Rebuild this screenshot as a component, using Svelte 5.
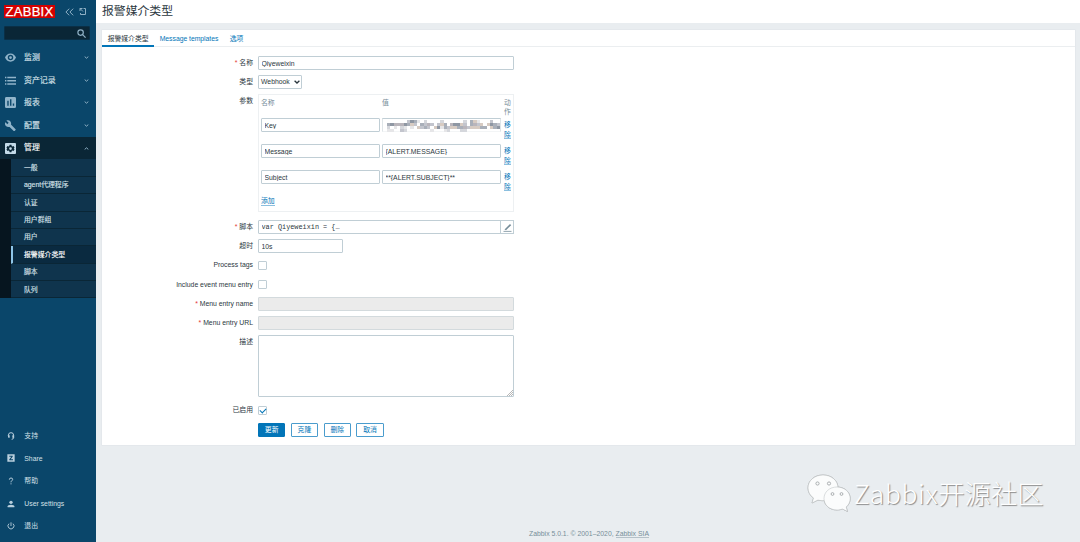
<script lang="ts">
    const mainMenu = [
        { icon: "eye", label: "监测" },
        { icon: "list", label: "资产记录" },
        { icon: "chart", label: "报表" },
        { icon: "wrench", label: "配置" },
        { icon: "gear", label: "管理" },
    ];
    const subMenu = ["一般", "agent代理程序", "认证", "用户群组", "用户", "报警媒介类型", "脚本", "队列"];
    const userMenu = [
        { icon: "support", label: "支持" },
        { icon: "share", label: "Share" },
        { icon: "help", label: "帮助" },
        { icon: "user", label: "User settings" },
        { icon: "power", label: "退出" },
    ];
    const tabs = ["报警媒介类型", "Message templates", "选项"];

    let activeTab = $state(0);
    let selected = $state("报警媒介类型");
    let name = $state("Qiyeweixin");
    let timeout = $state("10s");
    let description = $state("");
    let processTags = $state(false);
    let menuEntry = $state(false);
    let enabled = $state(true);
    let params = $state([
        { name: "Key", value: "", masked: true },
        { name: "Message", value: "{ALERT.MESSAGE}", masked: false },
        { name: "Subject", value: "**{ALERT.SUBJECT}**", masked: false },
    ]);

    // shades of the masked value, one row per string, "." is empty
    const mask = [
        "......3751.2....2......2.541...3..",
        "576667543.5363.345.67743.5634.4753",
        "2.1.21.1.4353.4715344556344455.457",
        "11..32.......1...12...22..........",
    ];
    const shades = ["", "#e6e6e8", "#d5d7dc", "#c3c5cd", "#d7cbc2", "#a9afb9", "#b9b5bb", "#8f97a3"];
    const maskCells = mask.flatMap((row, y) =>
        [...row].map((c, x) => ({ x, y, fill: shades[Number(c)] || "" })).filter((c) => c.fill)
    );
</script>

{#snippet icon(kind: string)}
    <svg class="icon" viewBox="0 0 24 24" fill="currentColor">
        {#if kind === "eye"}
            <path fill-rule="evenodd" d="M12 3C6 3 2 7 0 12c2 5 6 9 12 9s10-4 12-9c-2-5-6-9-12-9zm0 3a6 6 0 1 1 0 12 6 6 0 0 1 0-12zm0 3a3 3 0 1 0 0 6 3 3 0 0 0 0-6z" />
        {:else if kind === "list"}
            <path d="M0 4h3v3H0zM5 4h19v3H5zM0 11h3v3H0zM5 11h19v3H5zM0 18h3v3H0zM5 18h19v3H5z" />
        {:else if kind === "chart"}
            <path fill-rule="evenodd" d="M3 0h18q3 0 3 3v18q0 3-3 3H3q-3 0-3-3V3q0-3 3-3zm2 8v11h3V8zm6-3v14h3V5zm6 9v5h3v-5z" />
        {:else if kind === "wrench"}
            <path d="M23 20 13 10c1-3 0-6-2-8S6 0 3 1l5 5-3 3-4-4c-2 3-1 6 1 8s5 3 8 2l9 9q1 1 2 0l2-2q1-1 0-2z" />
        {:else if kind === "gear"}
            <path fill-rule="evenodd" d="M2 0h20q2 0 2 2v20q0 2-2 2H2q-2 0-2-2V2q0-2 2-2zm8 4-.6 2.400-1.800 1L5.200 6.700l-2 3.500L5 12l-1.800 1.800 2 3.500 2.400-.7 1.800 1L10 20h4l.6-2.400 1.800-1 2.400.7 2-3.500L19 12l1.800-1.800-2-3.500-2.400.7-1.800-1L14 4zm2 5a3 3 0 1 1 0 6 3 3 0 0 1 0-6z" />
        {:else if kind === "support"}
            <path d="M4 12V10a8 8 0 0 1 16 0v7q0 4-6 5" fill="none" stroke="currentColor" stroke-width="3" />
            <path d="M3 10h5v7H5q-2 0-2-3zM16 10h5v7h-5z" />
        {:else if kind === "share"}
            <path fill-rule="evenodd" d="M1 1h22v22H1zm6 4v3h6l-6 8v3h11v-3h-7l6-8V5z" />
        {:else if kind === "help"}
            <path d="M7 8q0-5 5-5t5 4c0 4-5 4-5 9M12 19v3" fill="none" stroke="currentColor" stroke-width="3" />
        {:else if kind === "user"}
            <circle cx="12" cy="7" r="5" />
            <path d="M2 22v-3q0-5 10-5t10 5v3z" />
        {:else if kind === "power"}
            <path d="M12 1v11M6 5a9 9 0 1 0 12 0" fill="none" stroke="currentColor" stroke-width="2.7" />
        {/if}
    </svg>
{/snippet}

<div class="page">
    <aside class="sidebar">
        <div class="brand">
            <span class="logo">ZABBIX</span>
            <svg class="collapse" viewBox="0 0 9 8" fill="none" stroke="currentColor"><path d="M4.2.7.9 4l3.3 3.3M8.2.7 4.9 4l3.3 3.3" /></svg>
            <svg class="kiosk" viewBox="0 0 8 8" fill="none" stroke="currentColor"><path d="M4.500.5h2v6h-5V5M1 .5h2.500M1 .5V3M1 .5l3 3" /></svg>
        </div>
        <div class="search">
            <svg viewBox="0 0 9 9" fill="none" stroke="currentColor" stroke-width="1.2"><circle cx="3.6" cy="3.6" r="2.7" /><path d="m5.6 5.6 3 3" /></svg>
        </div>
        <nav class="menu">
            {#each mainMenu as item, i}
                <a class="menu-item" class:open={i === 4} href="#{item.icon}">
                    {@render icon(item.icon)}
                    <span>{item.label}</span>
                    <svg class="chevron" viewBox="0 0 5 3" fill="none" stroke="currentColor"><path d={i === 4 ? "M.7 2.4 2.5.8l1.8 1.6" : "M.7.6l1.8 1.6L4.3.6"} /></svg>
                </a>
            {/each}
        </nav>
        <div class="submenu">
            {#each subMenu as label}
                <button class="sub-item" class:selected={selected === label} onclick={() => (selected = label)}>{label}</button>
            {/each}
        </div>
        <nav class="user-menu">
            {#each userMenu as item}
                <a class="menu-item" href="#{item.icon}">
                    {@render icon(item.icon)}
                    <span>{item.label}</span>
                </a>
            {/each}
        </nav>
    </aside>

    <div class="wrapper">
        <header><h1>报警媒介类型</h1></header>
        <main>
            <div class="tabs">
                {#each tabs as tab, i}
                    <button class="tab" class:active={activeTab === i} onclick={() => (activeTab = i)}>{tab}</button>
                {/each}
            </div>
            <form>
                <label class="required" for="name">名称</label>
                <div class="field"><input id="name" class="wide" bind:value={name} /></div>

                <label for="type">类型</label>
                <div class="field">
                    <button id="type" type="button" class="select">
                        Webhook
                        <svg viewBox="0 0 6 4" fill="none" stroke="currentColor" stroke-width="1.3"><path d="m.6.7 2.4 2.3L5.4.7" /></svg>
                    </button>
                </div>

                <span class="label">参数</span>
                <div class="params">
                    <div class="param head"><span>名称</span><span>值</span><span>动作</span></div>
                    {#each params as param}
                        <div class="param">
                            <input bind:value={param.name} />
                            {#if param.masked}
                                <div class="masked">
                                    <svg viewBox="0 0 34 4" preserveAspectRatio="none" shape-rendering="crispEdges">
                                        {#each maskCells as cell}
                                            <rect x={cell.x} y={cell.y} width="1" height="1" fill={cell.fill} />
                                        {/each}
                                    </svg>
                                </div>
                            {:else}
                                <input bind:value={param.value} />
                            {/if}
                            <a href="#remove"><span>移除</span></a>
                        </div>
                    {/each}
                    <a class="add" href="#add">添加</a>
                </div>

                <label class="required" for="script">脚本</label>
                <div class="field script">
                    <input id="script" value={"var Qiyeweixin = {…"} readonly />
                    <button type="button" aria-label="Edit script">
                        <svg viewBox="0 0 9 9"><path d="M1.5 6.5 7 1l1.2 1.2L3 7.2z" fill="#768d99" /><path d="M.5 8.4h8" stroke="#768d99" stroke-width=".8" /></svg>
                    </button>
                </div>

                <label for="timeout">超时</label>
                <div class="field"><input id="timeout" class="short" bind:value={timeout} /></div>

                <label for="tags">Process tags</label>
                <div class="field"><input id="tags" type="checkbox" bind:checked={processTags} /></div>

                <label for="entry">Include event menu entry</label>
                <div class="field"><input id="entry" type="checkbox" bind:checked={menuEntry} /></div>

                <label class="required" for="entry-name">Menu entry name</label>
                <div class="field"><input id="entry-name" class="wide" disabled={!menuEntry} /></div>

                <label class="required" for="entry-url">Menu entry URL</label>
                <div class="field"><input id="entry-url" class="wide" disabled={!menuEntry} /></div>

                <label for="description">描述</label>
                <div class="description">
                    <textarea id="description" bind:value={description}></textarea>
                    <svg class="grip" viewBox="0 0 6 6" stroke="#a5a5a5" stroke-width=".8"><path d="M0 6 6 0M2 6l4-4M4 6l2-2" /></svg>
                </div>

                <label for="enabled">已启用</label>
                <div class="field"><input id="enabled" type="checkbox" bind:checked={enabled} /></div>

                <div class="actions">
                    <button type="button" class="primary">更新</button>
                    <button type="button">克隆</button>
                    <button type="button">删除</button>
                    <button type="button">取消</button>
                </div>
            </form>
        </main>
        <footer>Zabbix 5.0.1. © 2001–2020, <a href="#sia">Zabbix SIA</a></footer>
    </div>

    <div class="watermark">
        <svg viewBox="0 0 44 38">
            <g fill="#fbfcfc" stroke="#c3c7c9" stroke-width=".6">
                <path d="M16 1C7.500 1 1 6.500 1 14c0 4 2 7.500 5.500 10L5 29l6-3c2 .6 4 .8 7 .6C29 26 31 20 31 14 31 6.500 24.500 1 16 1z" />
                <path d="M30 13c-7.500 0-13 5-13 11.500S22.500 36 30 36c2 0 4-.4 5.500-1l5 2.500-1.300-4.500c2.500-2 4-5 4-8.500C43.200 18 37.500 13 30 13z" />
            </g>
            <g fill="#fbfcfc" stroke="#a3a7a9" stroke-width=".9"><circle cx="10.500" cy="9.500" r="1.600" /><circle cx="22" cy="9.500" r="1.600" /><circle cx="25.500" cy="20" r="1.400" /><circle cx="34.500" cy="20" r="1.400" /></g>
        </svg>
        <span>Zabbix<b>开源社区</b></span>
    </div>
</div>

<style>
    :global(body) {
        margin: 0;
        overflow: hidden;
    }

    .page {
        position: relative;
        display: flex;
        height: 542px;
        background: #e9edf0;
        color: #2b373e;
        font: 6.85px/9.3px "Liberation Sans", "Noto Sans CJK SC", sans-serif;
        overflow: hidden;
    }

    * {
        box-sizing: border-box;
    }

    button,
    input,
    textarea {
        font: inherit;
        color: inherit;
        margin: 0;
        outline: none;
    }

    a {
        color: #0275b8;
        text-decoration: none;
    }

    svg {
        display: block;
        flex: none;
    }

    .sidebar {
        width: 96px;
        flex: none;
        display: flex;
        flex-direction: column;
        background: #0a466a;
        color: #c5d5df;
    }

    .brand {
        display: flex;
        align-items: center;
        height: 13px;
        margin: 5px 0 0 4px;
        color: #8fb0c5;
    }

    .logo {
        width: 51px;
        height: 13px;
        background: #d40000;
        color: #fff;
        font-size: 13px;
        line-height: 14px;
        text-align: center;
        letter-spacing: 0.3px;
        -webkit-text-stroke: 0.25px;
    }

    .collapse {
        width: 9px;
        height: 8px;
        margin-left: 10px;
    }

    .kiosk {
        width: 8px;
        height: 8px;
        margin-left: 5px;
    }

    .search {
        display: flex;
        align-items: center;
        justify-content: flex-end;
        width: 86px;
        height: 14px;
        margin: 8px 0 6.4px 4px;
        padding-right: 3px;
        border: 1px solid #0a2f46;
        border-radius: 1px;
        background: #0a2636;
        color: #8fb0c5;
    }

    .search svg {
        width: 9px;
        height: 9px;
    }

    .menu-item {
        display: flex;
        align-items: center;
        height: 22.6px;
        padding: 0 7px 0 5px;
        color: #d4e0e8;
        font-size: 7.9px;
        -webkit-text-stroke: 0.15px;
    }

    .menu-item span {
        flex: 1;
        white-space: nowrap;
    }

    .icon {
        width: 11px;
        height: 11px;
        margin-right: 8px;
        color: #91b4ca;
    }

    .chevron {
        width: 5px;
        height: 3px;
        color: #8fb0c5;
    }

    .menu-item.open {
        background: #0a2636;
        color: #fff;
    }

    .open .icon {
        color: #c3dae8;
    }

    .submenu {
        padding-left: 11px;
        background: #06151f;
    }

    .sub-item {
        display: block;
        width: 100%;
        height: 17.4px;
        padding: 0 0 0 13px;
        border: 0;
        border-bottom: 1px solid #0a2636;
        background: #0f344d;
        color: #d4e0e8;
        text-align: left;
        -webkit-text-stroke: 0.15px;
    }

    .sub-item.selected {
        padding-left: 11px;
        border-left: 2px solid #8ec5e8;
        background: #0a2a40;
        color: #fff;
    }

    .user-menu {
        margin-top: auto;
        padding-bottom: 4.6px;
    }

    .user-menu .menu-item {
        padding-left: 7px;
        font-size: 6.85px;
        -webkit-text-stroke: 0;
    }

    .user-menu .icon {
        width: 8px;
        height: 8px;
        margin-right: 9.3px;
        color: #b9cfdd;
    }

    .wrapper {
        flex: 1;
        display: flex;
        flex-direction: column;
    }

    header {
        height: 23px;
        padding-left: 6px;
        background: #fff;
    }

    h1 {
        margin: 0;
        font-size: 11.85px;
        font-weight: 400;
        line-height: 22.5px;
    }

    main {
        height: 415px;
        margin: 7px 5px 0 6px;
        background: #fff;
        box-shadow: 0 0 0 0.5px #dfe4e7;
    }

    .tabs {
        display: flex;
        height: 17px;
        border-bottom: 1px solid #ebeef0;
    }

    .tab {
        height: 17px;
        padding: 0 5.700px;
        border: 0;
        background: none;
        color: #0275b8;
        letter-spacing: -0.04px;
        white-space: nowrap;
    }

    .tab.active {
        width: 52px;
        border-bottom: 2px solid #0275b8;
        padding-top: 2px;
        color: #2b373e;
    }

    form {
        display: grid;
        grid-template-columns: 151px 256px;
        column-gap: 5px;
        row-gap: 5.2px;
        padding-top: 9px;
    }

    label,
    .label {
        padding-top: 2px;
        text-align: right;
        white-space: nowrap;
    }

    .required::before {
        content: "* ";
        color: #e33734;
    }

    .field {
        display: flex;
        align-items: center;
        height: 14px;
    }

    input,
    textarea,
    .select {
        height: 14px;
        padding: 0 2.5px;
        border: 1px solid #c0ced5;
        border-radius: 1px;
        background: #fff;
        line-height: 12px;
    }

    .wide {
        width: 256px;
    }

    .short {
        width: 85px;
    }

    input:disabled {
        background: #ebebeb;
        border-color: #d3dadd;
    }

    .select {
        display: flex;
        align-items: center;
        gap: 4px;
        width: 44px;
        padding: 0 2px;
    }

    .select svg {
        width: 6px;
        height: 4px;
    }

    input[type="checkbox"] {
        appearance: none;
        width: 9px;
        height: 9px;
        padding: 0;
    }

    input[type="checkbox"]:checked::before {
        content: "";
        display: block;
        width: 5px;
        height: 3px;
        margin: 1.5px 0 0 1px;
        border: solid #0275b8;
        border-width: 0 0 1.5px 1.5px;
        transform: rotate(-45deg);
    }

    .params {
        height: 118px;
        margin-bottom: 2.5px;
        padding: 2.5px 2px;
        border: 1px solid #edf0f2;
    }

    .param {
        display: grid;
        grid-template-columns: 119px 119px 8px;
        column-gap: 2px;
        align-items: start;
        height: 26px;
    }

    .param.head {
        height: 20.5px;
        color: #768d99;
    }

    .param > a,
    .head > span:last-child {
        width: 7px;
        margin-left: 1px;
        word-break: break-all;
    }

    .param > a {
        padding-top: 2px;
    }

    .param > a span,
    .add,
    footer a {
        border-bottom: 1px solid #8bbfdf;
    }

    .param > a span {
        display: block;
        height: 19px;
    }

    .add {
        display: inline-block;
        height: 9.5px;
        margin-top: -1px;
    }

    .masked {
        height: 14px;
        padding: 1px 1px 0 4px;
        border: 1px solid #dfe5e8;
        border-color: #c0ced5 #dfe5e8 #f3f5f6;
    }

    .masked svg {
        width: 113px;
        height: 12px;
    }

    .script input {
        width: 243px;
        font-family: "Liberation Mono", monospace;
        border-radius: 1px 0 0 1px;
    }

    .script button {
        width: 14px;
        height: 14px;
        margin-left: -1px;
        padding: 1.5px;
        border: 1px solid #c0ced5;
        background: #fff;
    }

    .script svg {
        width: 9px;
        height: 9px;
    }

    .description {
        position: relative;
        height: 62px;
        margin-bottom: 0.8px;
    }

    textarea {
        display: block;
        width: 256px;
        height: 62px;
        resize: none;
    }

    .grip {
        position: absolute;
        right: 1px;
        bottom: 1px;
        width: 6px;
        height: 6px;
    }

    .actions {
        grid-column: 2;
        display: flex;
        gap: 5.5px;
        padding-top: 0.6px;
    }

    .actions button {
        width: 27.3px;
        height: 14px;
        padding: 0;
        border: 1px solid #4a9ccd;
        border-radius: 1px;
        background: #fff;
        color: #0275b8;
    }

    .actions .primary {
        border-color: #0275b8;
        background: #0275b8;
        color: #fff;
    }

    footer {
        margin: auto 0 4px;
        padding-left: 2px;
        color: #768d99;
        text-align: center;
    }

    footer a {
        color: inherit;
        border-color: #b5c1c8;
    }

    .watermark {
        position: absolute;
        left: 807px;
        top: 473px;
        display: flex;
        align-items: center;
        color: #fff;
        font: 300 26.3px/40px "Noto Sans CJK SC", sans-serif;
        letter-spacing: 0.7px;
        text-shadow: 1px 1px 1px #8a8a8a;
        white-space: nowrap;
    }

    .watermark b {
        font-weight: inherit;
        letter-spacing: 0;
    }

    .watermark svg {
        width: 44px;
        height: 38px;
        margin-right: 3px;
        filter: drop-shadow(0.5px 0.5px 0.5px #999);
    }
</style>
